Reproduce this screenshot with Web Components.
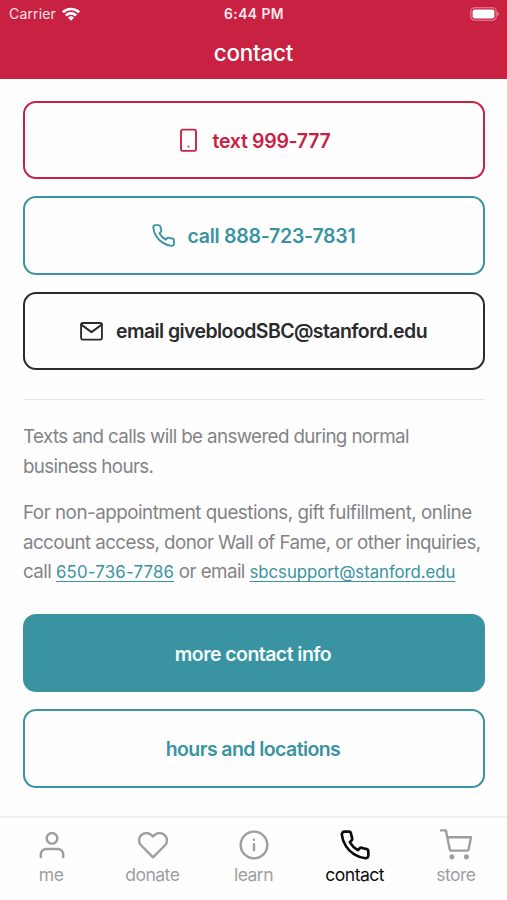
<!doctype html>
<html lang="en">
  <head>
    <meta charset="utf-8">
    <title>contact</title>
    <style>
      html, body {
        margin: 0;
        padding: 0;
        height: 100%;
      }
      body {
        font-family: Inter, "Liberation Sans", sans-serif;
        background: #fefefe;
        overflow: hidden;
      }
      .red { --color: #c92142; }
      .teal { --color: #3993a1; }
      .dark { --color: #2b2b2d; }
    </style>
  </head>
  <body>
    <template id="app-screen" data-component>
      <style>
        :host {
          height: 100%;
          display: flex;
          flex-direction: column;
        }
        main {
          flex: 1;
          box-sizing: border-box;
          padding: 22px 22px 0 23px;
          display: flex;
          flex-direction: column;
          gap: 17px;
        }
      </style>
      <slot name="header"></slot>
      <main><slot></slot></main>
      <slot name="tabs"></slot>
    </template>

    <template id="app-header" data-component>
      <style>
        :host {
          display: block;
          height: 79px;
          background: #c92142;
          color: #fff;
        }
        .status {
          display: grid;
          grid-template-columns: 1fr auto 1fr;
          align-items: center;
          height: 27px;
          padding: 0 8px 0 9px;
          font-size: 14px;
        }
        .carrier {
          display: flex;
          align-items: center;
          gap: 6px;
          letter-spacing: 0.15px;
          color: #fbe3e8;
        }
        .time {
          font-size: 13.8px;
          font-weight: 600;
          letter-spacing: 0.45px;
          color: #fdeaee;
        }
        .battery {
          justify-self: end;
        }
        svg {
          display: block;
        }
        h1 {
          margin: 0;
          font-size: 22.4px;
          font-weight: 550;
          line-height: 52px;
          letter-spacing: -0.2px;
          text-align: center;
        }
      </style>
      <div class="status">
        <div class="carrier">
          <span>Carrier</span>
          <svg width="18" height="14" viewBox="0 0 18 14" fill="none" stroke="#fff" stroke-width="2.6">
            <path d="M0.9 5.3a11.6 11.6 0 0 1 16.2 0"/>
            <path d="M3.9 8.5a7.3 7.3 0 0 1 10.2 0"/>
            <path d="M9 13.8L6 10.7a4.3 4.3 0 0 1 6 0z" fill="#fff" stroke="none"/>
          </svg>
        </div>
        <div class="time">6:44 PM</div>
        <svg class="battery" width="29" height="14" viewBox="0 0 29 14">
          <rect x="0.8" y="0.8" width="25.4" height="12.4" rx="3.6" fill="none" stroke="#e38a9b" stroke-width="1.1"/>
          <rect x="2.6" y="2.6" width="21.8" height="8.8" rx="1.8" fill="#fff"/>
          <path d="M27.4 4.8c1.9 0.7 1.9 3.7 0 4.4z" fill="#e38a9b"/>
        </svg>
      </div>
      <h1><slot></slot></h1>
    </template>

    <template id="action-button" data-component>
      <style>
        :host {
          box-sizing: border-box;
          display: flex;
          align-items: center;
          justify-content: center;
          gap: 12px;
          height: 78.3px;
          padding: 1px 2px 0 0;
          border: 2px solid var(--color);
          border-radius: 13px;
          color: var(--color);
          font-size: 19.5px;
          font-weight: 600;
          letter-spacing: var(--spacing, -0.55px);
          white-space: nowrap;
        }
        :host([filled]) {
          background: var(--color);
          color: #f4fcfd;
        }
      </style>
      <slot name="icon"></slot>
      <span><slot></slot></span>
    </template>

    <template id="contact-note" data-component>
      <style>
        :host {
          display: block;
          margin: 12px 0 9.5px;
          border-top: 1px solid #e8e8ea;
          padding-top: 22.5px;
          color: #838387;
          font-size: 18.8px;
          line-height: 29.4px;
          white-space: nowrap;
        }
        ::slotted(p) {
          margin: 0;
        }
        ::slotted(p:not(:first-child)) {
          margin-top: 17px;
        }
      </style>
      <slot></slot>
    </template>

    <template id="text-line" data-component>
      <style>
        :host {
          display: block;
          letter-spacing: var(--spacing);
        }
      </style>
      <slot></slot>
    </template>

    <template id="inline-link" data-component>
      <style>
        /* inline-block drops the whitespace around the slot */
        :host {
          display: inline-block;
          color: #3993a1;
          font-size: 16.8px;
          letter-spacing: var(--link-spacing);
          text-decoration: underline;
          text-decoration-thickness: 1.3px;
          text-underline-offset: 2.5px;
          text-decoration-skip-ink: none;
        }
      </style>
      <slot></slot>
    </template>

    <template id="tab-bar" data-component>
      <style>
        :host {
          box-sizing: border-box;
          height: 84px;
          display: grid;
          grid-template-columns: repeat(5, 1fr);
          padding-left: 1px;
          border-top: 2px solid #f0f0f1;
        }
      </style>
      <slot></slot>
    </template>

    <template id="tab-item" data-component>
      <style>
        :host {
          display: flex;
          flex-direction: column;
          align-items: center;
          padding-top: 11px;
          color: #9e9ea1;
          font-size: 17.6px;
          line-height: 28px;
          letter-spacing: -0.55px;
        }
        :host([active]) {
          color: #0c0c0c;
        }
        span {
          padding-right: 1px;
        }
      </style>
      <slot name="icon"></slot>
      <span><slot></slot></span>
    </template>

    <app-screen>
      <app-header slot="header">contact</app-header>

      <action-button class="red" style="--spacing: -0.3px">
        <line-icon slot="icon" name="smartphone" size="25"></line-icon>text 999-777
      </action-button>
      <action-button class="teal" style="--spacing: -0.26px">
        <line-icon slot="icon" name="phone" size="25"></line-icon>call 888-723-7831
      </action-button>
      <action-button class="dark" style="--spacing: -0.58px">
        <line-icon slot="icon" name="mail" size="25"></line-icon>email givebloodSBC@stanford.edu
      </action-button>

      <contact-note>
        <p>
          <text-line style="--spacing: -0.63px">Texts and calls will be answered during normal</text-line>
          <text-line style="--spacing: -0.65px">business hours.</text-line>
        </p>
        <p>
          <text-line style="--spacing: -0.49px">For non-appointment questions, gift fulfillment, online</text-line>
          <text-line style="--spacing: -0.58px">account access, donor Wall of Fame, or other inquiries,</text-line>
          <text-line style="--spacing: -0.58px">call <inline-link style="--link-spacing: 0.2px">650-736-7786</inline-link> or email <inline-link style="--link-spacing: -0.05px">sbcsupport@stanford.edu</inline-link></text-line>
        </p>
      </contact-note>

      <action-button class="teal" filled>more contact info</action-button>
      <action-button class="teal" style="--spacing: -0.58px">hours and locations</action-button>

      <tab-bar slot="tabs">
        <tab-item><line-icon slot="icon" name="user" size="32"></line-icon>me</tab-item>
        <tab-item><line-icon slot="icon" name="heart" size="32"></line-icon>donate</tab-item>
        <tab-item><line-icon slot="icon" name="info" size="32"></line-icon>learn</tab-item>
        <tab-item active><line-icon slot="icon" name="phone" size="32" weight="2"></line-icon>contact</tab-item>
        <tab-item><line-icon slot="icon" name="cart" size="32"></line-icon>store</tab-item>
      </tab-bar>
    </app-screen>

    <script>
      const icons = {
        smartphone: `<rect x="4.8" y="1.6" width="14.4" height="20.4" rx="1.8"/><path d="M12 17.6v0.1"/>`,
        phone: `<path d="M22 16.92v3a2 2 0 0 1-2.18 2 19.79 19.79 0 0 1-8.63-3.07 19.5 19.5 0 0 1-6-6 19.79 19.79 0 0 1-3.07-8.67A2 2 0 0 1 4.11 2h3a2 2 0 0 1 2 1.72 12.84 12.84 0 0 0 .7 2.81 2 2 0 0 1-.45 2.11L8.09 9.91a16 16 0 0 0 6 6l1.27-1.27a2 2 0 0 1 2.11-.45 12.84 12.84 0 0 0 2.81.7A2 2 0 0 1 22 16.92z"/>`,
        mail: `<rect x="2" y="3.8" width="20" height="16" rx="1.8"/><path d="M2.2 5.4L12 12.6l9.8-7.2"/>`,
        user: `<path d="M20.4 21v-2a4 4 0 0 0-4-4H7.6a4 4 0 0 0-4 4v2"/><circle cx="12" cy="7" r="4"/>`,
        heart: `<path d="M20.84 4.61a5.5 5.5 0 0 0-7.78 0L12 5.67l-1.06-1.06a5.5 5.5 0 0 0-7.78 7.78L12 21.23l8.84-8.84a5.5 5.5 0 0 0 0-7.78z"/>`,
        info: `<circle cx="12" cy="12" r="10"/><path d="M12 16v-4.6M12 8v0.1"/>`,
        cart: `<circle cx="8.9" cy="20.9" r="1" fill="currentColor"/><circle cx="19.8" cy="20.9" r="1" fill="currentColor"/><path d="M0.8 1h3.6l2.9 14.2a1.2 1.2 0 0 0 1.2 1h11.8a1.2 1.2 0 0 0 1.2-1L23.2 6.2H5.6"/>`,
      };

      customElements.define("line-icon", class extends HTMLElement {
        constructor() {
          super();
          this.attachShadow({ mode: "open" });
        }
        connectedCallback() {
          const size = this.getAttribute("size");
          const weight = this.getAttribute("weight") || 1.8;
          this.shadowRoot.innerHTML = `
            <style>
              :host { display: block; flex: none; }
              svg { display: block; }
            </style>
            <svg width="${size}" height="${size}" viewBox="0 0 24 24" fill="none" stroke="currentColor"
              stroke-width="${weight}" stroke-linecap="round" stroke-linejoin="round">${icons[this.getAttribute("name")]}</svg>`;
        }
      });

      document.querySelectorAll("[data-component]").forEach((template) => {
        customElements.define(template.id, class extends HTMLElement {
          constructor() {
            super();
            this.attachShadow({ mode: "open" })
              .appendChild(template.content.cloneNode(true));
          }
        });
      });
    </script>
  </body>
</html>
